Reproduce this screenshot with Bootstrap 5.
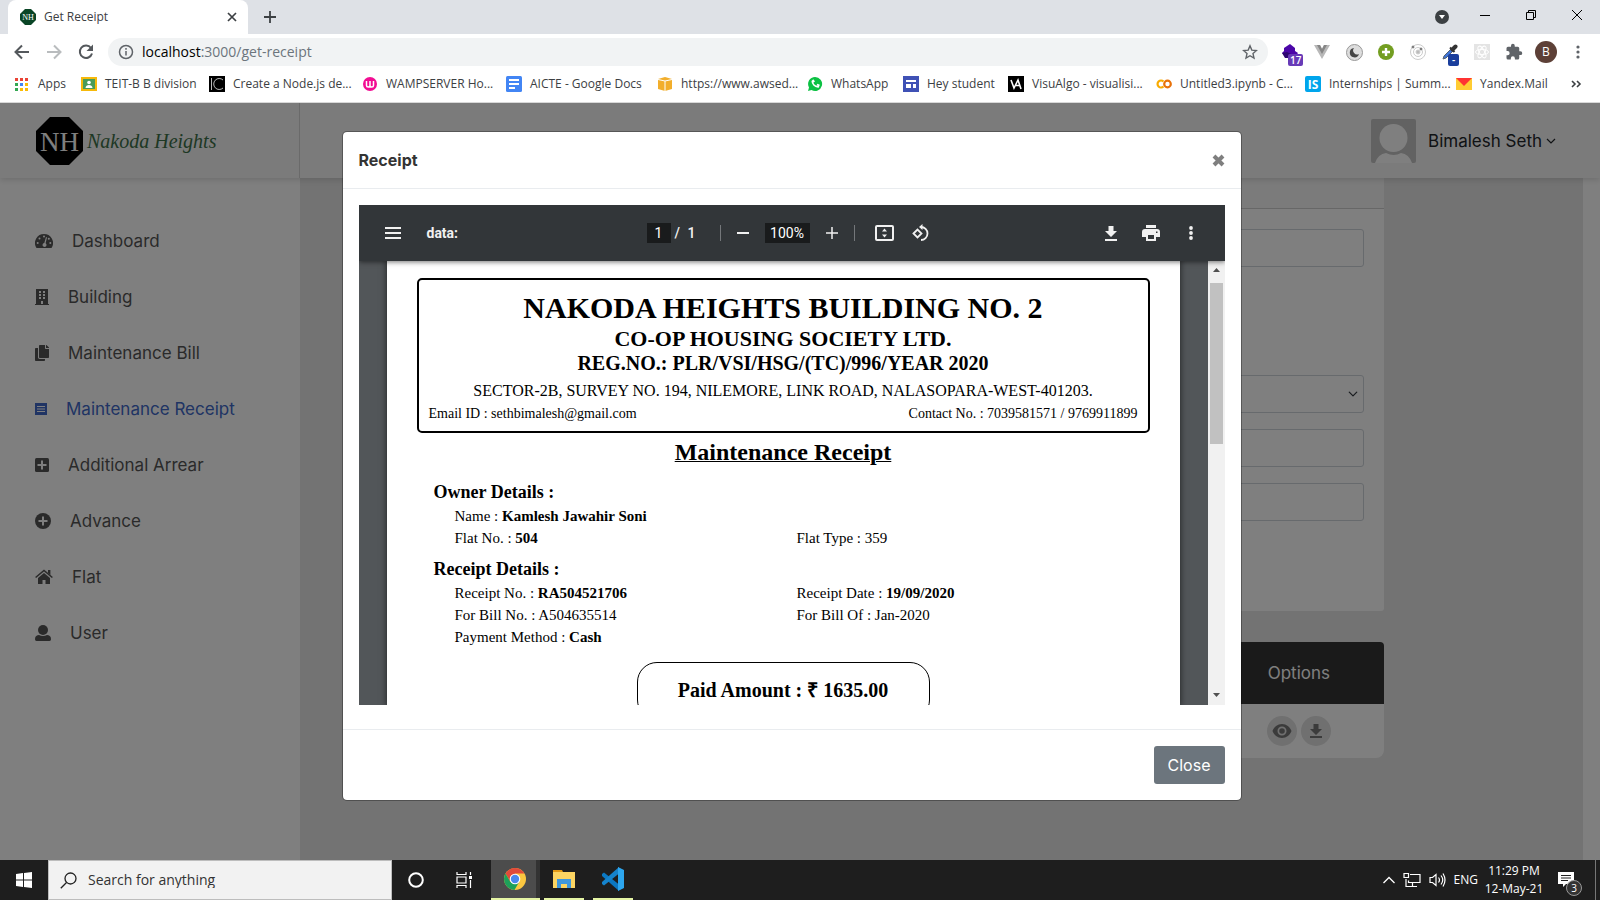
<!DOCTYPE html>
<html lang="en">
<head>
<meta charset="utf-8">
<meta name="viewport" content="width=device-width, initial-scale=1">
<title>Get Receipt</title>
<link href="https://cdn.jsdelivr.net/npm/bootstrap@5.3.0/dist/css/bootstrap.min.css" rel="stylesheet">
<style>
  :root { --ui: "Open Sans", "Noto Sans", sans-serif; --app: Inter, "Open Sans", sans-serif; }
  body { font-family: var(--ui); font-size: 12px; line-height: 16px; color: #3c4043; background: #fff; }
  button { font: inherit; color: inherit; background: none; border: 0; padding: 0; }
  svg { display: block; flex: none; }
  a { color: inherit; text-decoration: none; }

  /* browser frame */
  .tab-strip { height: 34px; background: #dee1e6; padding-left: 8px; }
  .browser-tab { width: 240px; height: 34px; background: #fff; border-radius: 8px 8px 0 0; padding: 0 10px 0 12px; }
  .win-controls { padding-right: 17px; padding-bottom: 4px; gap: 30px; }
  .tool-row { height: 36px; padding: 0 12px 0 13px; }
  .nav-ico { gap: 14px; width: 95px; }
  .omnibox { height: 28px; border-radius: 14px; background: #f1f3f4; padding: 0 10px; }
  .address-text { font-size: 14px; }
  .ext-list { gap: 12px; padding-left: 12px; }
  .ext-list > button { width: 20px; height: 24px; display: flex; align-items: center; justify-content: center; }
  .ext-badge { left: 8px; top: 14px; height: 12px; border-radius: 2px; font-size: 10px; line-height: 12px; color: #fff; padding: 0 2px; font-weight: 600; background: #673ab7; }
  .ext-badge.blue { background: #1a3e9c; padding: 0 4px; }
  .user-dot { width: 22px; height: 22px; border-radius: 50%; background: #5d4037; color: #fff; }
  .bookmarks { height: 33px; padding: 0 14px; border-bottom: 1px solid #d8d8d8; }
  .bookmark-list { display: grid; grid-template-columns: 67px 128px 153px 144px 151px 150px 96px 105px 148px 149px 151px 1fr; }
  .bookmark-list a { display: flex; align-items: center; gap: 8px; white-space: nowrap; }

  /* application */
  .app-view { font-family: var(--app); font-size: 16px; line-height: 24px; color: #555; background: #fff; overflow: hidden; }
  .app-head { height: 75px; background: #f6f6f6; box-shadow: 0 2px 6px rgba(0,0,0,.14); z-index: 2; padding-right: 44px; }
  .brand-box { width: 300px; padding-left: 36px; border-right: 1px solid #d4d4d4; gap: 4px; }
  .brand-script { font: italic 20px/24px "Liberation Serif", serif; color: #3c7048; }
  .account { font-size: 17px; }
  .side-menu { width: 300px; background: #fff; padding: 35px 0 0 35px; font-size: 17px; }
  .side-menu a { height: 56px; display: flex; align-items: center; gap: 19px; }
  .side-menu a.current { color: #4068c8; }
  .main-pane { background: #e6e6e6; margin-right: 17px; }
  .main-inner { max-width: 885px; }
  .form-panel { background: #fff; border-radius: 0 0 3px 3px; height: 433px; }
  .form-panel header { height: 31px; background: #f7f7f7; border-bottom: 1px solid #cfcfcf; }
  .form-panel .form-control, .form-panel .form-select { height: 38px; border-radius: 3px; border-color: #ced4da; }
  .form-panel .form-select { background-position: right 5px center; background-size: 10px; }
  .panel-fields { padding: 20px; display: grid; grid-template-rows: 38px 76px repeat(3, 38px); row-gap: 16px; }
  .receipt-list { margin-top: 31px; border-radius: 4px 4px 8px 8px; overflow: hidden; background: #fff; }
  .receipt-list th { height: 62px; background: #343434; color: #fff; font-size: 17px; font-weight: 400; padding: 0 54px; text-align: right; }
  .receipt-list td { height: 54px; padding: 0 53px; }
  .round-btn { width: 30px; height: 30px; border-radius: 50%; background: #e0e0e0; display: inline-flex; align-items: center; justify-content: center; }

  /* dialog */
  .receipt-modal { --bs-modal-width: 900px; --bs-modal-margin: 28px; --bs-modal-header-border-color: #e9ecef; --bs-modal-footer-border-color: #e9ecef; --bs-modal-border-radius: 5px; --bs-modal-inner-border-radius: 4px; --bs-modal-border-color: rgba(0,0,0,.3); background: rgba(0,0,0,.5); padding-right: 17px; overflow: hidden; }
  .receipt-modal .modal-header { height: 57px; }
  .receipt-modal .modal-title { font-size: 16px; font-weight: 700; color: #333; }
  .receipt-modal .modal-body { padding-bottom: 24px; }
  .receipt-modal .modal-footer { padding: 12px; }
  .receipt-modal .btn-secondary { width: 71px; height: 38px; padding: 0; border-radius: 3px; background: #6c757d; color: #fff; border: 0; }

  /* document viewer */
  .viewer { height: 500px; background: #525659; overflow: hidden; }
  .viewer-bar { height: 56px; flex: none; background: #323639; color: #f1f1f1; font: 500 14px/20px Roboto, sans-serif; display: grid; grid-template-columns: 1fr auto 1fr; align-items: center; padding: 0 18px; box-shadow: 0 1px 5px rgba(0,0,0,.55); z-index: 1; }
  .viewer-bar button { width: 32px; height: 32px; display: flex; align-items: center; justify-content: center; }
  .viewer-bar input { border: 0; padding: 0; height: 20px; width: 24px; background: #191b1c; color: #fff; text-align: center; }
  .doc-name { font-weight: 700; padding-left: 18px; }
  .page-count { width: 49px; padding: 0 24px 0 4px; }
  .zoom-group { display: flex; align-items: center; gap: 6px; margin-right: 14px; }
  .viewer-bar .zoom-field { width: 45px; }
  .bar-rule { width: 1px; height: 16px; background: #74777a; }
  .page-area { min-height: 0; }
  .sheet { max-width: 793px; padding: 17px 30px 0; background: #fff; color: #000; font-family: "Liberation Serif", serif; box-shadow: 0 0 6px 1px rgba(0,0,0,.5); }
  .society { border: 2px solid #000; border-radius: 5px; padding: 10px 10px 9px; text-align: center; }
  .society p, .society h1, .society h2, .society h3 { margin: 0; font-weight: 700; }
  .society h1 { font-size: 30px; line-height: 36px; }
  .society h2 { font-size: 22px; line-height: 25px; }
  .society h3 { font-size: 20px; line-height: 24px; }
  .society .address { font-size: 16px; line-height: 31px; font-weight: 400; }
  .society .contact { font-size: 14px; line-height: 16px; display: flex; justify-content: space-between; }
  .doc-title { font-size: 24px; line-height: 38px; font-weight: 700; text-align: center; margin: 0 0 10px; text-decoration: underline; text-decoration-thickness: 1px; }
  .sheet-section { padding-left: 17px; margin-bottom: 9px; }
  .sheet-section h4 { font-size: 18px; line-height: 22px; font-weight: 700; margin: 0 0 2px; }
  .sheet-section dl { display: grid; grid-template-columns: 342px 1fr; margin: 0; padding-left: 21px; font-size: 15px; line-height: 22px; }
  .paid { width: 293px; height: 58px; border: 1px solid #000; border-radius: 20px; margin: 14px auto 0; font-size: 20px; line-height: 54px; font-weight: 700; text-align: center; }
  .scroll-track { width: 17px; background: #f1f1f1; padding-top: 7px; }
  .scroll-thumb { width: 13px; height: 161px; background: #c1c1c1; margin: 11px auto auto; }

  /* desktop bar */
  .task-bar { height: 40px; background: #1e1e1e; color: #fff; }
  .start-btn { width: 48px; height: 40px; padding-left: 16px; }
  .search-wrap { width: 344px; height: 40px; background: #f2f2f2; border: 1px solid #bdbdbd; padding-left: 11px; gap: 11px; }
  .search-wrap input { border: 0; background: none; outline: 0; font-size: 14px; padding: 0; }
  .search-wrap input::placeholder { color: #333; opacity: 1; }
  .task-btn { width: 48px; height: 40px; display: flex; align-items: center; justify-content: center; }
  .task-btn.running { width: 40px; margin-left: 9px; border-bottom: 2px solid #e5f5a5; }
  .task-btn.focused { width: 49px; margin-left: 3px; background: linear-gradient(90deg, #4c4c4c 45px, #333 45px); padding-right: 1px; }
  .clock { width: 72px; line-height: 18px; text-align: center; }
  .notes { margin-right: 20px; }
  .note-count { left: 8px; top: 8px; width: 16px; height: 16px; border-radius: 50%; background: #333; border: 1px solid #999; font-size: 10px; line-height: 14px; }
  .peek { width: 5px; height: 40px; border-left: 1px solid #777; }
</style>
</head>
<body class="vh-100 d-flex flex-column overflow-hidden">

<header class="flex-shrink-0">
  <div class="tab-strip d-flex align-items-center">
    <div class="browser-tab d-flex align-items-center">
      <svg width="16" height="16" viewBox="0 0 16 16"><path d="M5 0h6l5 5v6l-5 5H5l-5-5V5z" fill="#0a4526"/><text x="8" y="11" font-family="Liberation Serif" font-size="8" fill="#fff" text-anchor="middle">NH</text></svg>
      <span class="flex-grow-1 ps-2">Get Receipt</span>
      <button aria-label="Close tab"><svg width="12" height="12" viewBox="0 0 12 12" stroke="#3c4043" stroke-width="1.7"><path d="M2 2l8 8M10 2l-8 8"/></svg></button>
    </div>
    <button class="ms-3" aria-label="New tab"><svg width="12" height="12" viewBox="0 0 12 12" stroke="#3c4043" stroke-width="1.8"><path d="M6 0v12M0 6h12"/></svg></button>
    <div class="win-controls d-flex align-items-center ms-auto">
      <button aria-label="Search tabs" class="pt-1"><svg width="14" height="14" viewBox="0 0 14 14"><circle cx="7" cy="7" r="7" fill="#3c4043"/><path d="M4 5h6l-3 4z" fill="#fff"/></svg></button>
      <button aria-label="Minimise"><svg width="12" height="12" viewBox="0 0 12 12" stroke="#000"><path d="M1 6.500h10"/></svg></button>
      <button aria-label="Restore" class="ms-1"><svg width="12" height="12" viewBox="0 0 12 12" fill="none" stroke="#000"><path d="M1.500 3.500h7v7h-7zM3.500 3.500v-2h7v7h-2"/></svg></button>
      <button aria-label="Close" class="ms-1"><svg width="12" height="12" viewBox="0 0 12 12" stroke="#000"><path d="M1 1l10 10M11 1L1 11"/></svg></button>
    </div>
  </div>
  <div class="tool-row d-flex align-items-center">
    <div class="nav-ico d-flex align-items-center">
      <button aria-label="Back"><svg width="18" height="18" viewBox="0 0 18 18" fill="none" stroke="#54585c" stroke-width="2"><path d="M16 9H3M9 2.500L2.500 9 9 15.500"/></svg></button>
      <button aria-label="Forward"><svg width="18" height="18" viewBox="0 0 18 18" fill="none" stroke="#b9bcbe" stroke-width="2"><path d="M2 9h13M9 2.500L15.500 9 9 15.500"/></svg></button>
      <button aria-label="Reload"><svg width="18" height="18" viewBox="0 0 18 18"><path d="M14 5a6.200 6.200 0 1 0 1 5.500" fill="none" stroke="#54585c" stroke-width="2"/><path d="M16 1.500V8H9.500z" fill="#54585c"/></svg></button>
    </div>
    <div class="omnibox d-flex align-items-center flex-grow-1">
      <svg width="16" height="16" viewBox="0 0 16 16" fill="none" stroke="#5f6368" stroke-width="1.500"><circle cx="8" cy="8" r="6.500"/><path d="M8 7v4.500M8 4v1.700"/></svg>
      <a class="address-text ps-2 flex-grow-1" href="#"><span class="text-black">localhost</span><span class="text-secondary">:3000/get-receipt</span></a>
      <button aria-label="Bookmark this page"><svg width="16" height="16" viewBox="0 0 16 16" fill="none" stroke="#5f6368" stroke-width="1.400"><path d="M8 1.800l1.800 4.300 4.700.4-3.500 3.100 1 4.500L8 11.700l-4 2.400 1-4.500L1.500 6.500l4.700-.4z"/></svg></button>
    </div>
    <div class="ext-list d-flex align-items-center">
      <button class="position-relative" aria-label="Extension, 17 items"><svg width="16" height="18" viewBox="0 0 16 18"><path d="M8 1l5 4v3l3 2-3 4H4l-4-4 2-2V5z" fill="#4b06a8"/><path d="M0 10l5-1 4 2v4H3z" fill="#2d0670"/></svg><span class="ext-badge position-absolute">17</span></button>
      <button aria-label="Vue devtools"><svg width="16" height="14" viewBox="0 0 16 14"><path d="M0 0h6l2 4 2-4h6L8 14z" fill="#b8b8b8"/><path d="M3 0h3l2 4 2-4h3L8 9z" fill="#868686"/></svg></button>
      <button aria-label="Dark mode"><svg width="17" height="17" viewBox="0 0 17 17"><circle cx="8.500" cy="8.500" r="8" fill="#ddd" stroke="#999"/><path d="M8 4a4.700 4.700 0 1 0 5 6 4 4 0 0 1-5-6z" fill="#444"/></svg></button>
      <button aria-label="Add"><svg width="16" height="16" viewBox="0 0 16 16"><circle cx="8" cy="8" r="8" fill="#739e21"/><path d="M8 4v8M4 8h8" stroke="#fff" stroke-width="2.400"/></svg></button>
      <button aria-label="Orbit"><svg width="16" height="16" viewBox="0 0 16 16" fill="none" stroke="#ccc"><circle cx="8" cy="8" r="7.500"/><circle cx="8" cy="8" r="4.500"/><circle cx="8" cy="8" r="2" fill="#bbb"/><circle cx="3" cy="3" r="1" fill="#777" stroke="#777"/><circle cx="11" cy="5" r="1" fill="#777" stroke="#777"/></svg></button>
      <button class="position-relative" aria-label="Colour picker"><svg width="16" height="16" viewBox="0 0 16 16"><path d="M1 15l1-3 7-7 2 2-7 7z" fill="#3f75d8" stroke="#55606e"/><path d="M8 3.500l4.500 4.500" stroke="#333" stroke-width="2"/><path d="M10.500 5.500l3-3" stroke="#333" stroke-width="4" stroke-linecap="round"/></svg><span class="ext-badge blue position-absolute">-</span></button>
      <button aria-label="React devtools"><svg width="16" height="16" viewBox="0 0 16 16"><path fill="#e4e4e4" d="M0 0h16v16H0z"/><g fill="none" stroke="#fff"><ellipse cx="8" cy="8" rx="6.500" ry="2.600"/><ellipse cx="8" cy="8" rx="6.500" ry="2.600" transform="rotate(60 8 8)"/><ellipse cx="8" cy="8" rx="6.500" ry="2.600" transform="rotate(120 8 8)"/></g></svg></button>
      <button aria-label="Extensions"><svg width="18" height="18" viewBox="0 0 24 24"><path fill="#5f6368" d="M20.500 11H19V7a2 2 0 0 0-2-2h-4V3.500a2.500 2.500 0 0 0-5 0V5H4a2 2 0 0 0-2 2v3.800h1.500a2.700 2.700 0 0 1 0 5.400H2V20a2 2 0 0 0 2 2h3.800v-1.500a2.700 2.700 0 0 1 5.400 0V22H17a2 2 0 0 0 2-2v-4h1.500a2.500 2.500 0 0 0 0-5z"/></svg></button>
      <button aria-label="Profile B"><span class="user-dot d-flex flex-shrink-0 align-items-center justify-content-center">B</span></button>
      <button aria-label="Browser menu"><svg width="4" height="16" viewBox="0 0 4 16" fill="#5f6368"><circle cx="2" cy="3" r="1.600"/><circle cx="2" cy="8" r="1.600"/><circle cx="2" cy="13" r="1.600"/></svg></button>
    </div>
  </div>
  <nav class="bookmarks d-flex align-items-center pb-1" aria-label="Bookmarks">
    <div class="bookmark-list flex-grow-1">
      <a href="#"><svg width="16" height="16" viewBox="0 0 16 16"><path fill="#ea4335" d="M1 2h3v3H1zM6 2h3v3H6zM11 2h3v3h-3z"/><path fill="#34a853" d="M1 7h3v3H1zM1 12h3v3H1z"/><path fill="#4285f4" d="M6 7h3v3H6z"/><path fill="#fbbc05" d="M11 7h3v3h-3zM6 12h3v3H6zM11 12h3v3h-3z"/></svg>Apps</a>
      <a href="#"><svg width="16" height="16" viewBox="0 0 16 16"><path fill="#f6b90a" d="M0 1h16v14H0z"/><path fill="#4a9b58" d="M2 3h12v10H2z"/><circle cx="8" cy="6.500" r="1.800" fill="#fff"/><path d="M4.500 12c0-4 7-4 7 0z" fill="#fff"/></svg>TEIT-B B division</a>
      <a href="#"><svg width="16" height="16" viewBox="0 0 16 16"><path d="M0 0h16v16H0z"/><path d="M2.500 2v12M14 4a5.500 5.500 0 1 0 0 8" fill="none" stroke="#bbb"/></svg>Create a Node.js de...</a>
      <a href="#"><svg width="16" height="16" viewBox="0 0 16 16" fill="none"><circle cx="8" cy="8" r="7" fill="#f20d93"/><path d="M4.500 5v4.500c0 2 3.500 2 3.500 0V5v4.500c0 2 3.500 2 3.500 0V5" stroke="#fff" stroke-width="1.500"/></svg>WAMPSERVER Ho...</a>
      <a href="#"><svg width="16" height="16" viewBox="0 0 16 16"><rect width="16" height="16" rx="1.500" fill="#4285f4"/><path d="M3 4h10M3 8h10M3 12h6" stroke="#fff" stroke-width="2"/></svg>AICTE - Google Docs</a>
      <a href="#"><svg width="16" height="16" viewBox="0 0 16 16"><path fill="#f2ae2b" d="M1 3l7-2 7 2v10l-7 2-7-2z"/><path d="M1 3.500L8 5l7-1.500M8 5v10" stroke="#fff" fill="none"/></svg>https://www.awsed...</a>
      <a href="#"><svg width="16" height="16" viewBox="0 0 16 16"><path fill="#0cc143" d="M8 1a7 7 0 1 1-3.500 13L1 15l1-3.500A7 7 0 0 1 8 1z"/><path fill="none" stroke="#fff" stroke-width="1.800" d="M5.300 4.800c0 3.200 2.500 5.800 5.800 6l.6-1.500-1.700-.8M5.300 4.800l1-.3.800 1.700"/></svg>WhatsApp</a>
      <a href="#"><svg width="16" height="16" viewBox="0 0 16 16"><path fill="#3f51b5" d="M0 0h16v16H0z"/><path fill="#fff" d="M3 4h10v2H3zM3 8h5v4H3zM10 8h3v4h-3z"/></svg>Hey student</a>
      <a href="#"><svg width="16" height="16" viewBox="0 0 16 16"><path d="M0 0h16v16H0z"/><path d="M3 4l3 8 4-8 3 9M8 9.500h4" fill="none" stroke="#fff" stroke-width="1.600"/></svg>VisuAlgo - visualisi...</a>
      <a href="#"><svg width="16" height="16" viewBox="0 0 16 16" fill="none" stroke-width="2.200"><path d="M7.500 5.500a3.500 3.500 0 1 0 0 5" stroke="#f9ab00"/><circle cx="11.500" cy="8" r="3.300" stroke="#e8710a"/></svg>Untitled3.ipynb - C...</a>
      <a href="#"><svg width="16" height="16" viewBox="0 0 16 16"><rect width="16" height="16" rx="2" fill="#00a5ec"/><text x="8" y="12.500" text-anchor="middle" font-family="Open Sans" font-weight="700" font-size="12" fill="#fff">IS</text></svg>Internships | Summ...</a>
      <a href="#"><svg width="16" height="16" viewBox="0 0 16 16"><path fill="#fc3" d="M0 2h16v12H0z"/><path fill="#f33" d="M0 2h16L8 10z"/></svg>Yandex.Mail</a>
    </div>
    <button aria-label="More bookmarks" class="me-1"><svg width="11" height="10" viewBox="0 0 11 10" fill="none" stroke="#3c4043" stroke-width="1.600"><path d="M1 2l3 3-3 3M6 2l3 3-3 3"/></svg></button>
  </nav>
</header>

<div class="app-view position-relative d-flex flex-column flex-grow-1">
  <header class="app-head d-flex flex-shrink-0 position-relative">
    <a href="#" class="brand-box d-flex align-items-center">
      <svg width="47" height="48" viewBox="0 0 47 48"><path d="M14 0h19l14 14v20L33 48H14L0 34V14z"/><text x="23.500" y="34" text-anchor="middle" font-family="Liberation Serif" font-size="27" fill="#fff">NH</text></svg>
      <span class="brand-script">Nakoda Heights</span>
    </a>
    <button class="account d-flex align-items-center ms-auto text-dark">
      <svg width="45" height="44" viewBox="0 0 45 44"><rect width="45" height="44" rx="2" fill="#c4c4c4"/><circle cx="22.500" cy="19" r="14" fill="#fff"/><path d="M4 44q3-9 11-10 8 4 15 0 8 1 11 10z" fill="#fff"/></svg>
      <span class="ps-2 ms-1">Bimalesh Seth</span>
      <svg class="ms-1" width="10" height="8" viewBox="0 0 10 8" fill="none" stroke="currentColor" stroke-width="1.200"><path d="M1 2l4 4 4-4"/></svg>
    </button>
  </header>
  <div class="d-flex flex-grow-1">
    <nav class="side-menu flex-shrink-0" aria-label="Main menu">
      <a href="#"><svg width="18" height="16" viewBox="0 0 18 16" fill="currentColor"><path d="M9 1a9 9 0 0 0-7.800 13.500q.3.500.9.500h13.800q.6 0 .9-.5A9 9 0 0 0 9 1z"/><g fill="#fff"><circle cx="9" cy="3.500" r="1"/><circle cx="4.500" cy="5.500" r="1"/><circle cx="2.700" cy="10" r="1"/><circle cx="15.300" cy="10" r="1"/><circle cx="13.800" cy="5.800" r="1"/><path d="M11 4l1 .4-1.400 5.800a2 2 0 1 1-1.300-.3z"/></g></svg>Dashboard</a>
      <a href="#"><svg width="14" height="16" viewBox="0 0 14 16"><path fill="currentColor" d="M1 0h12v15h1v1H0v-1h1z"/><path fill="#fff" d="M4 2h2v2H4zM8 2h2v2H8zM4 5h2v2H4zM8 5h2v2H8zM4 8h2v2H4zM8 8h2v2H8zM6 12h2v3H6z"/></svg>Building</a>
      <a href="#"><svg width="14" height="16" viewBox="0 0 448 512"><path fill="currentColor" d="M320 448v40c0 13-11 24-24 24H24c-13 0-24-11-24-24V120c0-13 11-24 24-24h72v296c0 31 25 56 56 56zm0-344V0H152c-13 0-24 11-24 24v368c0 13 11 24 24 24h272c13 0 24-11 24-24V128H344c-13 0-24-11-24-24zm121-31L375 7c-5-5-11-7-17-7h-6v96h96v-6c0-6-3-12-7-17z"/></svg>Maintenance Bill</a>
      <a href="#" class="current"><svg width="12" height="12" viewBox="0 0 12 12"><path fill="currentColor" d="M0 0h12v12H0z"/><path stroke="#fff" d="M2 3.500h8M2 6h8M2 8.500h8"/></svg>Maintenance Receipt</a>
      <a href="#"><svg width="14" height="14" viewBox="0 0 14 14"><rect width="14" height="14" rx="1.500" fill="currentColor"/><path d="M7 2.500v9M2.500 7h9" stroke="#fff" stroke-width="2"/></svg>Additional Arrear</a>
      <a href="#"><svg width="16" height="16" viewBox="0 0 16 16"><circle cx="8" cy="8" r="8" fill="currentColor"/><path d="M8 3.500v9M3.500 8h9" stroke="#fff" stroke-width="2"/></svg>Advance</a>
      <a href="#"><svg width="18" height="16" viewBox="0 0 18 16"><path d="M.6 8.500L9 1.500l8.400 7" fill="none" stroke="currentColor" stroke-width="1.600"/><path fill="currentColor" d="M13 1h2.400v5L13 4zM3 9l6-5 6 5v6h-4.500v-4h-3v4H3z"/></svg>Flat</a>
      <a href="#"><svg width="16" height="16" viewBox="0 0 16 16" fill="currentColor"><circle cx="8" cy="5" r="5"/><path d="M0 14c0-3 2-4 4-4q4 2 8 0c2 0 4 1 4 4 0 1-.5 2-1.500 2h-13C.5 16 0 15 0 14z"/></svg>User</a>
    </nav>
    <main class="main-pane flex-grow-1">
      <div class="main-inner mx-auto">
        <form class="form-panel">
          <header></header>
          <div class="panel-fields">
            <input class="form-control" type="text" aria-label="Receipt number">
            <span></span>
            <select class="form-select" aria-label="Payment method"><option></option></select>
            <input class="form-control" type="text" aria-label="Bill">
            <input class="form-control" type="text" aria-label="Amount">
          </div>
        </form>
        <table class="receipt-list w-100">
          <thead><tr><th scope="col">Options</th></tr></thead>
          <tbody><tr><td><div class="d-flex justify-content-end gap-1">
            <button class="round-btn" aria-label="View"><svg width="20" height="14" viewBox="0 0 20 14"><path fill="#777" fill-rule="evenodd" d="M10 0c4.500 0 8 3 9.500 7-1.500 4-5 7-9.500 7S2 11 .5 7C2 3 5.500 0 10 0zm0 2.500a4.500 4.500 0 1 0 0 9 4.500 4.500 0 0 0 0-9zM10 4.200a2.800 2.800 0 1 1 0 5.600 2.800 2.800 0 0 1 0-5.600z"/></svg></button>
            <button class="round-btn" aria-label="Download"><svg width="12" height="14" viewBox="0 0 12 14"><path fill="#777" d="M3.500 0h5v5H12l-6 6-6-6h3.500zM0 12h12v2H0z"/></svg></button>
          </div></td></tr></tbody>
        </table>
      </div>
    </main>
  </div>

  <div class="modal receipt-modal d-block position-absolute" role="dialog" aria-labelledby="dlgTitle">
    <div class="modal-dialog">
      <div class="modal-content">
        <div class="modal-header">
          <h5 class="modal-title" id="dlgTitle">Receipt</h5>
          <button aria-label="Close dialog"><svg width="13" height="13" viewBox="0 0 13 13" stroke="#7f7f7f" stroke-width="4"><path d="M2 2l9 9M11 2l-9 9"/></svg></button>
        </div>
        <div class="modal-body">
          <div class="viewer d-flex flex-column">
            <div class="viewer-bar position-relative">
              <div class="d-flex align-items-center">
                <button aria-label="Toggle sidebar"><svg width="16" height="12" viewBox="0 0 16 12" fill="#f1f1f1"><path d="M0 0h16v2H0zM0 5h16v2H0zM0 10h16v2H0z"/></svg></button>
                <span class="doc-name">data:</span>
              </div>
              <div class="d-flex align-items-center">
                <input type="text" value="1" aria-label="Page number">
                <span class="page-count d-flex justify-content-between"><span>/</span><span>1</span></span>
                <div class="zoom-group">
                  <span class="bar-rule"></span>
                  <button aria-label="Zoom out"><svg width="12" height="12" viewBox="0 0 12 12"><path d="M0 5h12v2H0z" fill="#f1f1f1"/></svg></button>
                  <input class="zoom-field" type="text" value="100%" aria-label="Zoom level">
                  <button aria-label="Zoom in"><svg width="12" height="12" viewBox="0 0 12 12" stroke="#f1f1f1" stroke-width="1.500"><path d="M6 0v12M0 6h12"/></svg></button>
                  <span class="bar-rule"></span>
                </div>
                <button class="me-1" aria-label="Fit to page"><svg width="19" height="16" viewBox="0 0 19 16"><rect x="1" y="1" width="17" height="14" rx="1" fill="none" stroke="#f1f1f1" stroke-width="2"/><path d="M7 6.500l2.500-3 2.500 3zM7 9.500l2.500 3 2.500-3z" fill="#f1f1f1"/></svg></button>
                <button aria-label="Rotate"><svg width="18" height="18" viewBox="0 0 18 18" fill="none" stroke="#f1f1f1" stroke-width="1.800"><path d="M1.500 9.500L5.500 5.500l4 4-4 4zM9 3a6.500 6.500 0 1 1 0 13"/><path d="M10.500 0L7 3l3.500 3z" fill="#f1f1f1" stroke="none"/></svg></button>
              </div>
              <div class="d-flex align-items-center justify-content-end gap-2">
                <button aria-label="Download document"><svg width="12" height="15" viewBox="0 0 12 15"><path fill="#f1f1f1" d="M3.500 0h5v5H12l-6 6-6-6h3.500zM0 13h12v2H0z"/></svg></button>
                <button aria-label="Print"><svg width="18" height="16" viewBox="0 0 18 16"><path fill="#f1f1f1" fill-rule="evenodd" d="M4 0h10v3H4zM3 4h12q3 0 3 3v5h-4v4H4v-4H0V7q0-3 3-3zm3 6v4h6v-4zm8-3.500h1.500V8H14z"/></svg></button>
                <button aria-label="More actions"><svg width="4" height="14" viewBox="0 0 4 14" fill="#f1f1f1"><circle cx="2" cy="2" r="1.900"/><circle cx="2" cy="7" r="1.900"/><circle cx="2" cy="12" r="1.900"/></svg></button>
              </div>
            </div>
            <div class="page-area d-flex flex-grow-1">
              <div class="flex-grow-1 overflow-hidden">
                <article class="sheet mx-auto h-100 overflow-hidden">
                  <div class="society">
                    <h1>NAKODA HEIGHTS BUILDING NO. 2</h1>
                    <h2>CO-OP HOUSING SOCIETY LTD.</h2>
                    <h3>REG.NO.: PLR/VSI/HSG/(TC)/996/YEAR 2020</h3>
                    <p class="address">SECTOR-2B, SURVEY NO. 194, NILEMORE, LINK ROAD, NALASOPARA-WEST-401203.</p>
                    <div class="contact"><span>Email ID : sethbimalesh@gmail.com</span><span>Contact No. : 7039581571 / 9769911899</span></div>
                  </div>
                  <h2 class="doc-title">Maintenance Receipt</h2>
                  <section class="sheet-section">
                    <h4>Owner Details :</h4>
                    <dl><div>Name : <b>Kamlesh Jawahir Soni</b></div><div></div><div>Flat No. : <b>504</b></div><div>Flat Type : 359</div></dl>
                  </section>
                  <section class="sheet-section">
                    <h4>Receipt Details :</h4>
                    <dl><div>Receipt No. : <b>RA504521706</b></div><div>Receipt Date : <b>19/09/2020</b></div><div>For Bill No. : A504635514</div><div>For Bill Of : Jan-2020</div><div>Payment Method : <b>Cash</b></div></dl>
                  </section>
                  <div class="paid">Paid Amount : ₹ 1635.00</div>
                </article>
              </div>
              <div class="scroll-track d-flex flex-column align-items-center pb-2">
                <svg width="7" height="4" viewBox="0 0 7 4"><path d="M0 4l3.500-4L7 4z" fill="#505050"/></svg>
                <div class="scroll-thumb"></div>
                <svg width="7" height="4" viewBox="0 0 7 4"><path d="M0 0l3.500 4L7 0z" fill="#505050"/></svg>
              </div>
            </div>
          </div>
        </div>
        <div class="modal-footer"><button class="btn btn-secondary">Close</button></div>
      </div>
    </div>
  </div>
</div>

<footer class="task-bar d-flex align-items-center flex-shrink-0">
  <button class="start-btn" aria-label="Start"><svg width="16" height="16" viewBox="0 0 16 16" fill="#fff"><path d="M0 2l7-1v6.500H0zM8 1l8-1v7.500H8zM0 8.500h7V15l-7-1zM8 8.500h8V16l-8-1z"/></svg></button>
  <div class="search-wrap d-flex align-items-center">
    <svg width="17" height="17" viewBox="0 0 17 17" fill="none" stroke="#222" stroke-width="1.300"><circle cx="10.500" cy="6.500" r="5.500"/><path d="M6.500 10.500L.8 16.200"/></svg>
    <input type="text" placeholder="Search for anything" aria-label="Search for anything">
  </div>
  <button class="task-btn" aria-label="Cortana"><svg width="16" height="16" viewBox="0 0 16 16"><circle cx="8" cy="8" r="6.800" fill="none" stroke="#fff" stroke-width="2"/></svg></button>
  <button class="task-btn" aria-label="Task view"><svg width="16" height="16" viewBox="0 0 16 16" fill="none" stroke="#fff" stroke-width="1.200"><path d="M1 0v2.500h9V0M1 16v-2.500h9V16M1 5h9v6H1zM14.500 0v3M14.500 8v8"/><path d="M13 4h3v3h-3z" fill="#fff" stroke="none"/></svg></button>
  <button class="task-btn running focused" aria-label="Chrome"><svg width="24" height="24" viewBox="0 0 24 24"><circle cx="12" cy="12" r="11" fill="#fbc740"/><path d="M12 6.500h9.500A11 11 0 0 0 2.500 6.500l4.700 8.200z" fill="#e04a3a"/><path d="M2.500 6.500a11 11 0 0 0 9 16.500l4.900-8.500-9.200.2z" fill="#1da05a"/><circle cx="12" cy="12" r="5.300" fill="#fff"/><circle cx="12" cy="12" r="4.200" fill="#4a88ee"/></svg></button>
  <button class="task-btn running ms-1" aria-label="File Explorer"><svg width="22" height="20" viewBox="0 0 22 20"><path d="M0 1h9l1 2H0z" fill="#e39a16"/><path d="M0 3h22v16H0z" fill="#fcd462"/><path d="M4 19v-9h14v9h-4v-4H8v4z" fill="#3f97dc"/></svg></button>
  <button class="task-btn running" aria-label="Visual Studio Code"><svg width="24" height="24" viewBox="0 0 24 24"><path d="M1 7l2-1.500L18 17.500V24L1 9z" fill="#0b78c2"/><path d="M1 17l2 1.500L18 6.500V0L1 15z" fill="#1583cc"/><path d="M17 0l6 3v18l-6 3z" fill="#2da6ee"/></svg></button>
  <div class="d-flex align-items-center ms-auto">
    <button aria-label="Show hidden icons"><svg width="12" height="8" viewBox="0 0 12 8" fill="none" stroke="#fff" stroke-width="1.300"><path d="M0.500 7L6 1.500 11.500 7"/></svg></button>
    <svg class="ms-2 me-2" width="18" height="16" viewBox="0 0 18 16" fill="none" stroke="#fff" stroke-width="1.200"><path d="M7 2.500h10v8H5.500v-2M9.500 11v3M6 14.500h8M3 7v7.500h3"/><path d="M1 1.500h4.500v4H1z"/></svg>
    <svg width="17" height="16" viewBox="0 0 17 16" fill="none" stroke="#fff" stroke-width="1.200"><path d="M1 5.500h2.500L7 2.500v11L3.500 10.500H1zM9.500 5.500q2 2.500 0 5M12 3.500q3.500 4.500 0 9M14 1.500q4 6.500 0 13"/></svg>
    <span class="ps-2">ENG</span>
    <div class="clock me-2">11:29 PM<br>12-May-21</div>
    <button class="notes position-relative" aria-label="3 notifications"><svg width="17" height="16" viewBox="0 0 17 16"><path d="M0 0h16v12H8l-3 3v-3H0z" fill="#fff"/><path d="M3 3.500h10M3 6h10M3 8.500h7" stroke="#222"/></svg><span class="note-count position-absolute">3</span></button>
    <span class="peek"></span>
  </div>
</footer>
<script src="https://cdn.jsdelivr.net/npm/bootstrap@5.3.0/dist/js/bootstrap.bundle.min.js"></script>
</body>
</html>
